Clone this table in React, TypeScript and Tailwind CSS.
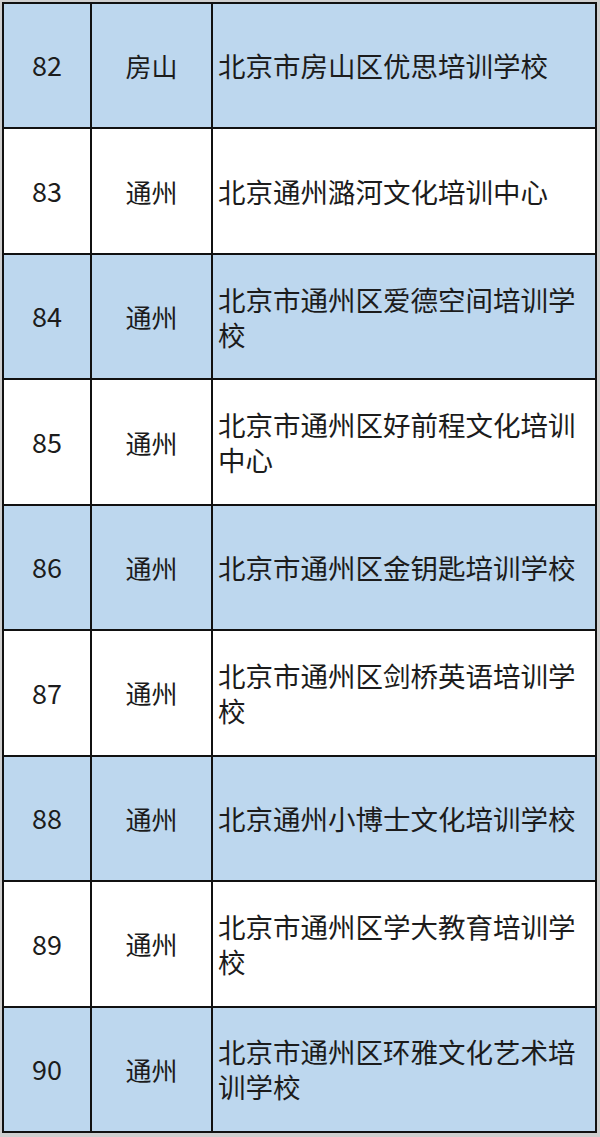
const rows = [
  { no: "82", area: "房山", name: "北京市房山区优思培训学校" },
  { no: "83", area: "通州", name: "北京通州潞河文化培训中心" },
  { no: "84", area: "通州", name: "北京市通州区爱德空间培训学校" },
  { no: "85", area: "通州", name: "北京市通州区好前程文化培训中心" },
  { no: "86", area: "通州", name: "北京市通州区金钥匙培训学校" },
  { no: "87", area: "通州", name: "北京市通州区剑桥英语培训学校" },
  { no: "88", area: "通州", name: "北京通州小博士文化培训学校" },
  { no: "89", area: "通州", name: "北京市通州区学大教育培训学校" },
  { no: "90", area: "通州", name: "北京市通州区环雅文化艺术培训学校" },
];

export default function App() {
  return (
    <div
      className="w-[600px] h-[1137px] bg-[#cfcfcf] pt-[2px] pl-[2px] text-[#1c1c1c]"
      style={{ fontFamily: '"Noto Sans CJK SC", "Noto Sans", sans-serif' }}
    >
      <div className="grid w-[595px] h-[1131px] grid-cols-[86px_119px_382px] grid-rows-[repeat(9,1fr)] gap-[2px] p-[2px] bg-[#111]">
        {rows.map((r, i) => {
          const bg = i % 2 === 0 ? "bg-[#bdd7ee]" : "bg-white";
          return (
            <div key={r.no} className="contents">
              <div className={`${bg} flex items-center justify-center text-[27px]`}>{r.no}</div>
              <div className={`${bg} flex items-center justify-center text-[26px]`}>{r.area}</div>
              <div className={`${bg} flex items-center pl-[5px] pr-[2px] text-[27.5px] leading-[35px]`}>
                <span>{r.name}</span>
              </div>
            </div>
          );
        })}
      </div>
    </div>
  );
}
